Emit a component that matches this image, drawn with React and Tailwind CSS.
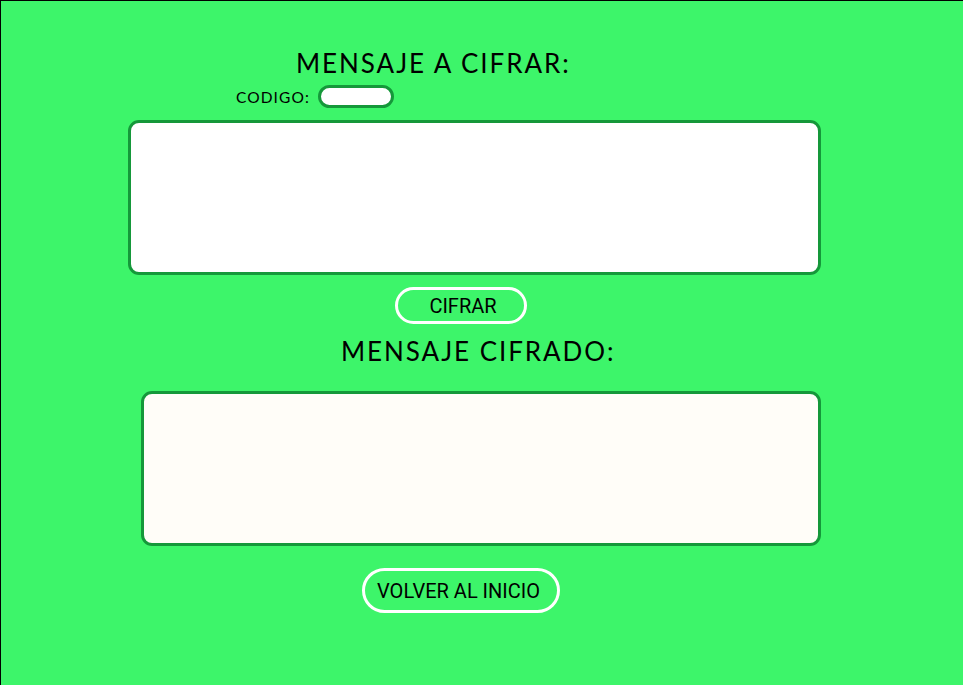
const titleFont = { fontFamily: "Lato, 'Open Sans', sans-serif" };

export default function App() {
  return (
    <main className="min-h-screen w-full bg-[#3df56a] border-l border-t border-black font-['Roboto',sans-serif] text-black">
      <section className="flex flex-col pt-[45px]">
        <h1
          className="ml-[295px] text-[26px] leading-[34px] tracking-[0.075em] font-normal"
          style={titleFont}
        >
          MENSAJE A CIFRAR:
        </h1>
        <div className="ml-[235px] mt-[5px] flex items-center gap-[8px]">
          <label
            className="text-[15.5px] leading-[22px] tracking-[0.07em]"
            style={titleFont}
          >
            CODIGO:
          </label>
          <input
            type="text"
            className="h-[23px] w-[76px] rounded-full border-[3px] border-[#15983a] bg-white outline-none"
          />
        </div>
        <textarea className="ml-[127px] mt-[12px] h-[155px] w-[693px] resize-none rounded-[11px] border-[3px] border-[#15983a] bg-white outline-none" />
        <button className="ml-[394px] mt-[12px] h-[37px] w-[132px] rounded-full border-[3px] border-white pl-[4px] text-[20px] leading-none text-black">
          CIFRAR
        </button>
        <h2
          className="ml-[340px] mt-[10px] text-[26px] leading-[34px] tracking-[0.075em] font-normal"
          style={titleFont}
        >
          MENSAJE CIFRADO:
        </h2>
        <textarea className="ml-[140px] mt-[23px] h-[155px] w-[680px] resize-none rounded-[11px] border-[3px] border-[#15983a] bg-[#fffdf8] outline-none" />
        <button className="ml-[361px] mt-[22px] h-[45px] w-[198px] rounded-full border-[3px] border-white pr-[5px] text-[20px] leading-none text-black">
          VOLVER AL INICIO
        </button>
      </section>
    </main>
  );
}
